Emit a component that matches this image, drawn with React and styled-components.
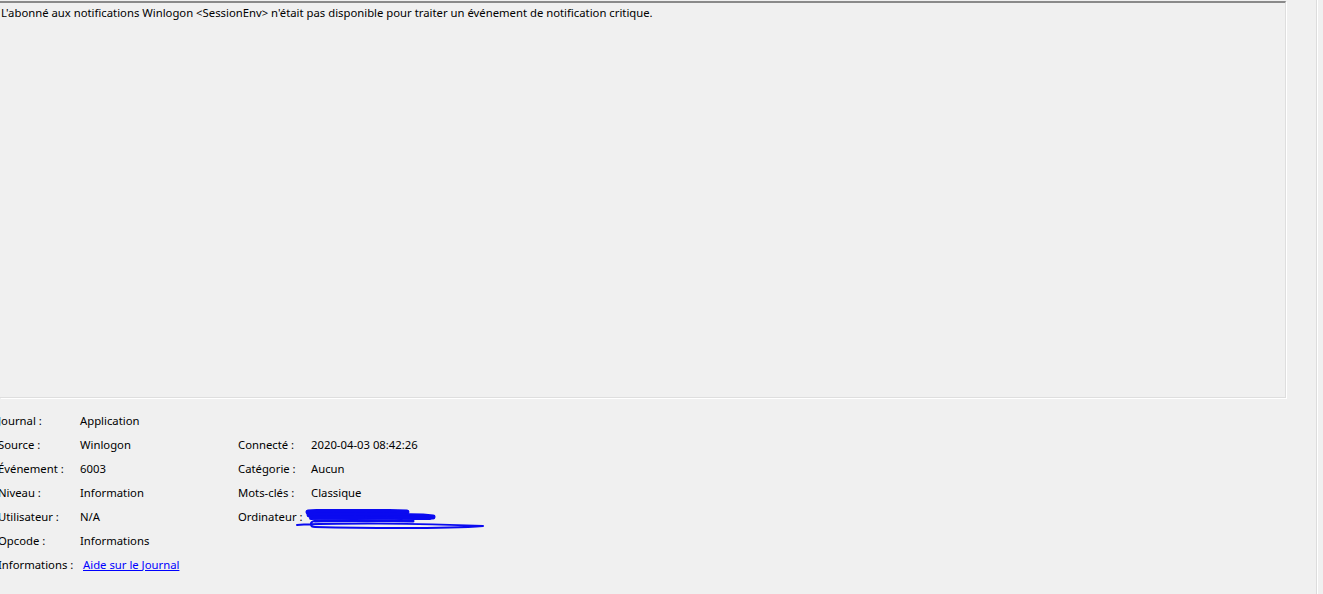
import React from 'react';
import styled, { createGlobalStyle } from 'styled-components';

const GlobalStyle = createGlobalStyle`
  html, body {
    margin: 0;
    padding: 0;
    background: #f0f0f0;
    overflow: hidden;
  }
  body {
    font-family: "Noto Sans", "Open Sans", sans-serif;
    font-size: 11.3px;
    color: #000;
  }
`;

const Window = styled.div`
  display: flex;
  width: 1323px;
  height: 594px;
  background: #f0f0f0;
`;

const Main = styled.div`
  display: flex;
  flex-direction: column;
  width: 1286px;
  padding-top: 1px;
`;

const Sidebar = styled.div`
  width: 30px;
  border-right: 1px solid #dcdcdc;
  box-shadow: 1px 0 0 #ffffff;
`;

const Description = styled.div`
  height: 392px;
  border-top: 2px solid #8a8a8a;
  border-right: 1px solid #dedede;
  border-bottom: 1px solid #dedede;
  box-shadow: 1px 1px 0 #ffffff;
  padding: 2px 0 0 1px;
  line-height: 16px;
`;

const Details = styled.div`
  display: grid;
  grid-template-columns: 82px 158px 73px 1fr;
  grid-auto-rows: 24px;
  align-items: center;
  margin-top: 10px;
  margin-left: -2px;
`;

const Label = styled.span`
  white-space: nowrap;
`;

const Value = styled.span`
  white-space: nowrap;
  display: flex;
  align-items: center;
  height: 24px;
`;

const Link = styled.a`
  color: #0000ff;
  text-decoration: underline;
  margin-left: 3px;
  cursor: pointer;
`;

const Scribble = () => (
  <svg width="200" height="28" viewBox="0 0 200 28" style={{ marginLeft: -16, marginTop: 14 }}>
    <g fill="none" stroke="#0a0af0" strokeLinecap="round" strokeLinejoin="round">
      <path d="M13 3 C40 1 80 2 112 3" strokeWidth="5" />
      <path d="M14 6 C50 5 90 6 128 7 L138 8" strokeWidth="5" />
      <path d="M16 9 C60 8 100 9 135 9" strokeWidth="4" />
      <path d="M20 12 C60 11 100 12 118 12" strokeWidth="3" />
      <path d="M2 16 C40 14 120 14 188 17 C150 20 60 19 20 18 C15 18 14 13 20 12" strokeWidth="2" />
      <path d="M70 8 C90 8 110 9 106 11" strokeWidth="2" />
    </g>
  </svg>
);

export default function App() {
  return (
    <Window>
      <GlobalStyle />
      <Main>
        <Description>
          L'abonné aux notifications Winlogon &lt;SessionEnv&gt; n'était pas disponible pour traiter un événement de notification critique.
        </Description>
        <Details>
          <Label>Journal :</Label>
          <Value>Application</Value>
          <span />
          <span />

          <Label>Source :</Label>
          <Value>Winlogon</Value>
          <Label>Connecté :</Label>
          <Value>2020-04-03 08:42:26</Value>

          <Label>Événement :</Label>
          <Value>6003</Value>
          <Label>Catégorie :</Label>
          <Value>Aucun</Value>

          <Label>Niveau :</Label>
          <Value>Information</Value>
          <Label>Mots-clés :</Label>
          <Value>Classique</Value>

          <Label>Utilisateur :</Label>
          <Value>N/A</Value>
          <Label>Ordinateur :</Label>
          <Value>
            <Scribble />
          </Value>

          <Label>Opcode :</Label>
          <Value>Informations</Value>
          <span />
          <span />

          <Label>Informations :</Label>
          <Value>
            <Link>Aide sur le Journal</Link>
          </Value>
          <span />
          <span />
        </Details>
      </Main>
      <Sidebar />
    </Window>
  );
}
